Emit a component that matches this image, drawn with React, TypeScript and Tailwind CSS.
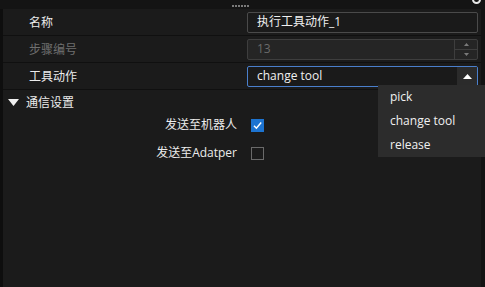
import React from "react";

const font = {
  fontFamily: '"Segoe UI", "Open Sans", "Noto Sans CJK SC", sans-serif',
};

function Row({
  label,
  disabled,
  children,
}: {
  label: string;
  disabled?: boolean;
  children: React.ReactNode;
}) {
  return (
    <div className="flex items-center h-[27px] border-b border-[#101010]">
      <div
        className={`w-[244px] pl-[26px] pt-[1px] text-[12px] ${
          disabled ? "text-[#6f6f6f]" : "text-[#ececec]"
        }`}
      >
        {label}
      </div>
      {children}
    </div>
  );
}

function CheckRow({ label, checked }: { label: string; checked?: boolean }) {
  return (
    <div className="flex items-center h-[28px]">
      <div className="w-[234px] text-right text-[12px] text-[#ececec]">
        {label}
      </div>
      <div className="ml-[14px]">
        {checked ? (
          <div className="w-[13px] h-[13px] bg-[#1d74d1] flex items-center justify-center">
            <svg width="11" height="11" viewBox="0 0 11 11">
              <path
                d="M2 5.8 L4.4 8.2 L9.2 2.6"
                fill="none"
                stroke="#fff"
                strokeWidth="1.5"
              />
            </svg>
          </div>
        ) : (
          <div className="w-[13px] h-[13px] border border-[#6a6a6a]" />
        )}
      </div>
    </div>
  );
}

export default function App() {
  return (
    <div
      className="relative w-[485px] h-[287px] overflow-hidden bg-[#1b1b1b] flex flex-col"
      style={font}
    >
      {/* Top handle */}
      <div className="h-[9px] bg-[#141414] flex justify-center items-end pb-[2px] pr-[4px]">
        <div className="flex gap-[1px]">
          {[0, 1, 2, 3, 4, 5].map((i) => (
            <div key={i} className="w-[2px] h-[2px] bg-[#7a7a7a]" />
          ))}
        </div>
      </div>

      <div className="flex flex-1">
        <div className="w-[3px] bg-[#0e0e0e]" />
        <div className="flex-1 flex flex-col">
          <Row label="名称">
            <div className="w-[231px] h-[21px] border border-[#4a4a4a] rounded-[2px] bg-[#1a1a1a] flex items-center pl-[9px] text-[12px] text-[#f0f0f0]">
              执行工具动作_1
            </div>
          </Row>
          <Row label="步骤编号" disabled>
            <div className="w-[231px] h-[21px] border border-[#3e3e3e] rounded-[2px] bg-[#252525] flex items-center text-[12px] text-[#6a6a6a]">
              <div className="flex-1 pl-[9px]">13</div>
              <div className="w-[23px] h-full border-l border-[#3e3e3e] flex flex-col">
                <div className="flex-1 flex items-center justify-center border-b border-[#3e3e3e]">
                  <svg width="5" height="3" viewBox="0 0 5 3">
                    <path d="M0 3 L2.5 0 L5 3 Z" fill="#7a7a7a" />
                  </svg>
                </div>
                <div className="flex-1 flex items-center justify-center">
                  <svg width="5" height="3" viewBox="0 0 5 3">
                    <path d="M0 0 L2.5 3 L5 0 Z" fill="#7a7a7a" />
                  </svg>
                </div>
              </div>
            </div>
          </Row>
          <Row label="工具动作">
            <div className="w-[231px] h-[21px] border border-[#4a7fcc] rounded-[2px] bg-[#1a1a1a] flex items-center text-[12px] text-[#f0f0f0]">
              <div className="flex-1 pl-[9px]">change tool</div>
              <div className="w-[20px] h-full bg-[#2b2b2b] flex items-center justify-center">
                <svg width="9" height="5" viewBox="0 0 9 5">
                  <path d="M0 5 L4.5 0 L9 5 Z" fill="#ffffff" />
                </svg>
              </div>
            </div>
          </Row>

          <div className="flex items-center h-[25px] pl-[5px]">
            <svg width="11" height="7" viewBox="0 0 11 7">
              <path d="M0 0 L11 0 L5.5 7 Z" fill="#f0f0f0" />
            </svg>
            <span className="ml-[7px] text-[12px] text-[#ececec]">通信设置</span>
          </div>

          <div className="mt-[-4px]">
            <CheckRow label="发送至机器人" checked />
            <CheckRow label="发送至Adatper" />
          </div>
        </div>
        <div className="w-[4px] bg-[#131313]" />
      </div>

      {/* Corner icon, cut off at top */}
      <div className="absolute right-[4px] top-[-5px] w-[9px] h-[9px] rounded-full border-2 border-[#e8e8e8]" />

      {/* Dropdown popup */}
      <div className="absolute left-[378px] top-[85px] w-[107px] h-[72px] bg-[#2c2c2c] flex flex-col pl-[12px] text-[12px] text-[#f0f0f0]">
        <div className="h-[24px] flex items-center">pick</div>
        <div className="h-[24px] flex items-center">change tool</div>
        <div className="h-[24px] flex items-center">release</div>
      </div>
    </div>
  );
}
